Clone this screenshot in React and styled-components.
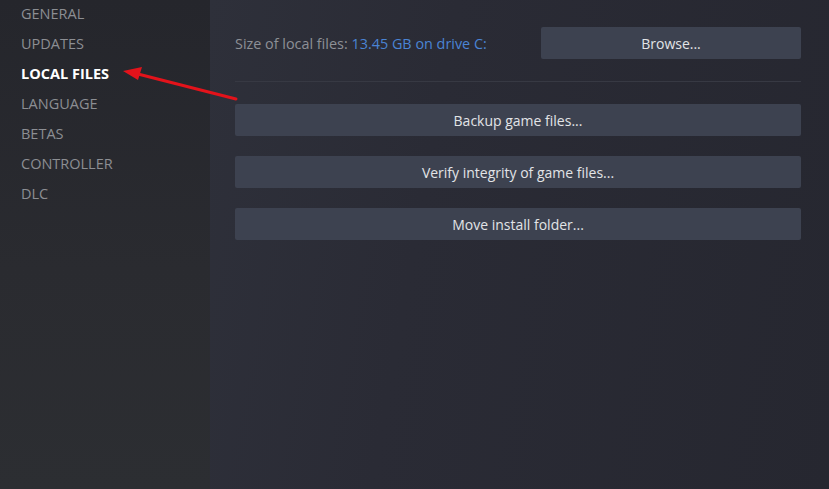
import React from 'react';
import styled, { createGlobalStyle } from 'styled-components';

const GlobalStyle = createGlobalStyle`
    html, body {
        margin: 0;
        padding: 0;
        height: 100%;
        background: #262730;
    }
    #root {
        height: 100%;
    }
`;

const Window = styled.div`
    position: relative;
    display: flex;
    width: 829px;
    height: 489px;
    overflow: hidden;
    font-family: 'Open Sans', 'Liberation Sans', sans-serif;
`;

const Sidebar = styled.nav`
    width: 210px;
    flex-shrink: 0;
    display: flex;
    flex-direction: column;
    margin: 0;
    padding: 0;
    background: linear-gradient(to bottom, #25262c 0%, #2a2b30 55%, #2c2e32 100%);
`;

const NavItem = styled.div`
    height: 30px;
    line-height: 30px;
    padding-left: 21px;
    font-size: 14.5px;
    text-transform: uppercase;
    font-weight: ${(p) => (p.$active ? 700 : 400)};
    color: ${(p) => (p.$active ? '#ffffff' : '#8c8e93')};
    &:first-child {
        margin-top: -1px;
    }
`;

const Main = styled.main`
    flex: 1;
    padding: 27px 28px 0 25px;
    display: flex;
    flex-direction: column;
    background: linear-gradient(100deg, #2e303a 0%, #2a2b35 35%, #262730 100%);
`;

const SizeRow = styled.div`
    display: flex;
    align-items: center;
    justify-content: space-between;
    padding-bottom: 22px;
    border-bottom: 1px solid #373943;
`;

const SizeText = styled.span`
    font-size: 14.4px;
    color: #8d9096;
`;

const SizeValue = styled.span`
    color: #4a84d4;
`;

const Button = styled.div`
    height: 32px;
    display: flex;
    align-items: center;
    justify-content: center;
    width: ${(p) => p.$width || '100%'};
    background: #3d4250;
    border-radius: 2px;
    color: #e2e4e7;
    font-size: 14px;
    box-sizing: border-box;
`;

const ActionList = styled.div`
    display: flex;
    flex-direction: column;
    gap: 20px;
    margin-top: 22px;
`;

const Arrow = styled.svg`
    position: absolute;
    left: 110px;
    top: 60px;
    overflow: visible;
`;

const navItems = ['General', 'Updates', 'Local Files', 'Language', 'Betas', 'Controller', 'DLC'];

const actions = ['Backup game files...', 'Verify integrity of game files...', 'Move install folder...'];

export default function App() {
    return (
        <>
            <GlobalStyle />
            <Window>
                <Sidebar>
                    {navItems.map((item) => (
                        <NavItem key={item} $active={item === 'Local Files'}>
                            {item}
                        </NavItem>
                    ))}
                </Sidebar>

                <Main>
                    <SizeRow>
                        <SizeText>
                            Size of local files: <SizeValue>13.45 GB on drive C:</SizeValue>
                        </SizeText>
                        <Button $width="260px">Browse...</Button>
                    </SizeRow>

                    <ActionList>
                        {actions.map((label) => (
                            <Button key={label}>{label}</Button>
                        ))}
                    </ActionList>
                </Main>

                {/* red annotation arrow */}
                <Arrow width="130" height="45" viewBox="0 0 130 45">
                    <line x1="126" y1="39" x2="24" y2="13" stroke="#e3131b" strokeWidth="3" strokeLinecap="round" />
                    <polygon points="13,11 32,7 28,20" fill="#e3131b" />
                </Arrow>
            </Window>
        </>
    );
}
